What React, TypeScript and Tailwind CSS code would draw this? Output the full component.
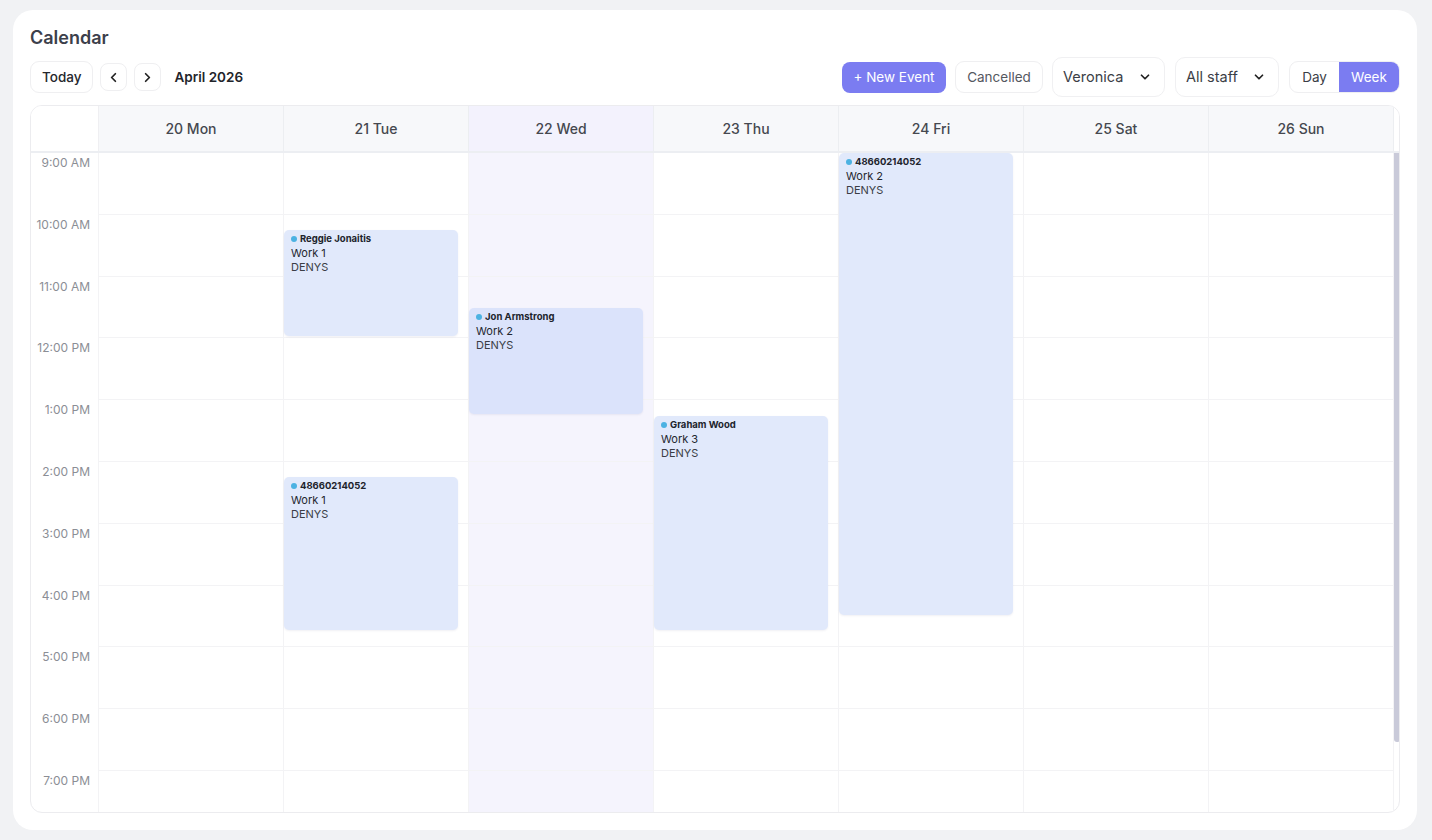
import { ChevronLeft, ChevronRight, ChevronDown } from "lucide-react";

interface CalEvent {
  day: number;
  start: number;
  end: number;
  who: string;
  title: string;
  staff: string;
}

const HOUR = 61.8;

const days = ["20 Mon", "21 Tue", "22 Wed", "23 Thu", "24 Fri", "25 Sat", "26 Sun"];
const hours = ["9:00 AM", "10:00 AM", "11:00 AM", "12:00 PM", "1:00 PM", "2:00 PM", "3:00 PM", "4:00 PM", "5:00 PM", "6:00 PM", "7:00 PM"];
const today = 2;

const events: CalEvent[] = [
  { day: 1, start: 10.25, end: 12, who: "Reggie Jonaitis", title: "Work 1", staff: "DENYS" },
  { day: 1, start: 14.25, end: 16.75, who: "48660214052", title: "Work 1", staff: "DENYS" },
  { day: 2, start: 11.5, end: 13.25, who: "Jon Armstrong", title: "Work 2", staff: "DENYS" },
  { day: 3, start: 13.25, end: 16.75, who: "Graham Wood", title: "Work 3", staff: "DENYS" },
  { day: 4, start: 9, end: 16.5, who: "48660214052", title: "Work 2", staff: "DENYS" },
];

function EventCard({ ev }: { ev: CalEvent }) {
  const top = (ev.start - 9) * HOUR;
  const height = (ev.end - ev.start) * HOUR - 2;
  return (
    <div
      className={`absolute left-0 right-[10px] rounded-[5px] px-[7px] pt-[2px] shadow-[0_1px_2px_rgba(60,70,120,0.08)] ${
        ev.day === today ? "bg-[#dbe3fb]" : "bg-[#e1e9fb]"
      }`}
      style={{ top, height }}
    >
      <div className="flex items-center gap-[3px] text-[9.5px] font-bold text-[#20232c] leading-[14px]">
        <span className="w-[6px] h-[6px] rounded-full bg-[#4cb2e2]" />
        {ev.who}
      </div>
      <div className="text-[11px] text-[#23262e] leading-[14px]">{ev.title}</div>
      <div className="text-[11px] text-[#3a3d45] leading-[15px]">{ev.staff}</div>
    </div>
  );
}

function Select({ label, width }: { label: string; width: string }) {
  return (
    <button className={`${width} h-[40px] flex items-center justify-between pl-[10px] pr-[12px] rounded-[10px] border border-[#f0f0f2] bg-white text-[14.5px] text-[#3b3e46]`}>
      {label}
      <ChevronDown className="w-[14px] h-[14px] text-[#222]" strokeWidth={3} />
    </button>
  );
}

export default function App() {
  return (
    <div
      className="min-h-screen bg-[#f1f2f4] pt-[10px] pb-[10px] pl-[13px] pr-[15px]"
      style={{ fontFamily: "Inter, 'Open Sans', sans-serif" }}
    >
      <div className="h-[820px] bg-white rounded-[20px] pt-[16px] px-[17px] pb-[17px] flex flex-col">
        <h1 className="h-[24px] leading-[24px] text-[18px] font-semibold text-[#3c404b]">Calendar</h1>

        <div className="mt-[7px] h-[40px] flex items-center justify-between">
          <div className="flex items-center gap-[7px]">
            <button className="h-[32px] px-[11px] rounded-[9px] border border-[#efeff1] text-[13.5px] font-medium text-[#25272d]">
              Today
            </button>
            <button className="h-[28px] w-[27px] flex items-center justify-center rounded-[8px] border border-[#efeff1] text-[#222]">
              <ChevronLeft className="w-[15px] h-[15px]" strokeWidth={2.8} />
            </button>
            <button className="h-[28px] w-[27px] flex items-center justify-center rounded-[8px] border border-[#efeff1] text-[#222]">
              <ChevronRight className="w-[15px] h-[15px]" strokeWidth={2.8} />
            </button>
            <span className="ml-[6px] text-[13.5px] font-semibold text-[#22242a]">April 2026</span>
          </div>

          <div className="flex items-center gap-[9px]">
            <button className="h-[31px] w-[104px] rounded-[8px] bg-[#7b7cf1] text-[13.5px] text-white">
              + New Event
            </button>
            <button className="h-[32px] w-[88px] rounded-[9px] border border-[#efeff1] text-[13.5px] text-[#55585f]">
              Cancelled
            </button>
            <Select label="Veronica" width="w-[113px]" />
            <div className="ml-[1px]">
              <Select label="All staff" width="w-[104px]" />
            </div>
            <div className="ml-[1px] flex h-[32px] rounded-[9px] border border-[#efeff1] overflow-hidden">
              <button className="w-[49px] text-[13.5px] text-[#3b3e46]">Day</button>
              <button className="w-[60px] bg-[#7b7cf1] text-[13.5px] text-white">Week</button>
            </div>
          </div>
        </div>

        <div className="mt-[8px] flex-1 flex flex-col rounded-[12px] border border-[#ececef] overflow-hidden">
          {/* header */}
          <div className="h-[47px] flex border-b-2 border-[#eceef2]">
            <div className="w-[68px] shrink-0 bg-white border-r border-[#efeff2]" />
            {days.map((d, i) => (
              <div
                key={d}
                className={`w-[185px] shrink-0 flex items-center justify-center border-r border-[#eceef1] text-[14px] font-medium text-[#45484f] ${
                  i === today ? "bg-[#f3f2fd]" : "bg-[#f7f8fa]"
                }`}
              >
                {d}
              </div>
            ))}
            <div className="flex-1 bg-white" />
          </div>

          {/* body */}
          <div className="flex-1 flex overflow-hidden">
            <div className="w-[68px] shrink-0 border-r border-[#f3f3f5]">
              {hours.map((h) => (
                <div key={h} className="h-[61.8px] pr-[8px] pt-[1px] text-right text-[12px] text-[#8b8e95]">
                  {h}
                </div>
              ))}
            </div>
            {days.map((d, i) => (
              <div
                key={d}
                className={`relative w-[185px] shrink-0 border-r border-[#f3f3f5] ${i === today ? "bg-[#f5f4fd]" : ""}`}
              >
                {hours.map((h) => (
                  <div key={h} className="h-[61.8px] border-b border-[#f3f3f5]" />
                ))}
                {events
                  .filter((e) => e.day === i)
                  .map((e, k) => (
                    <EventCard key={k} ev={e} />
                  ))}
              </div>
            ))}
            <div className="flex-1 flex justify-center">
              <div className="w-[6px] h-[589px] rounded-b-[3px] bg-[#c9cad9]" />
            </div>
          </div>
        </div>
      </div>
    </div>
  );
}
